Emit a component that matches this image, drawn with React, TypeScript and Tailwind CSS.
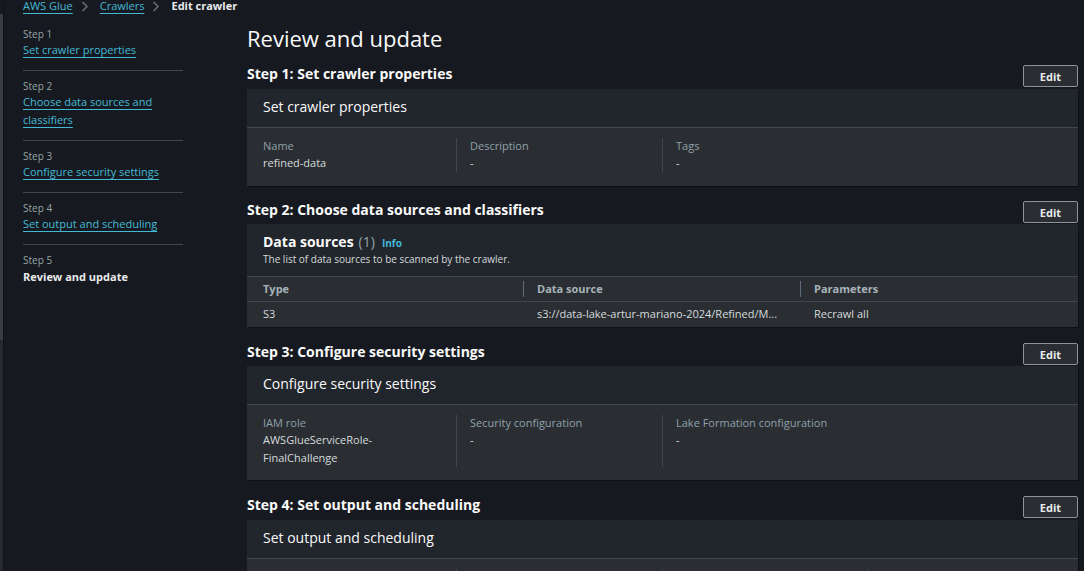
import React from "react";

const Chevron = () => (
  <svg width="8" height="11" viewBox="0 0 8 11" className="mx-[8px] shrink-0">
    <path d="M1.5 1 L6 5.5 L1.5 10" fill="none" stroke="#687078" strokeWidth="1.5" />
  </svg>
);

const EditButton = () => (
  <button className="h-[22px] w-[55px] border border-[#8d9599] bg-[#2a2e33] text-[11px] font-bold leading-none text-[#e9ebed] rounded-[2px]">
    Edit
  </button>
);

const StepHeader = ({ title }: { title: string }) => (
  <div className="flex h-[22px] items-center justify-between">
    <h2 className="mb-[4px] text-[14px] font-bold leading-[18px] text-[#fafafa]">{title}</h2>
    <EditButton />
  </div>
);

const SimpleHeader = ({ title }: { title: string }) => (
  <div className="flex h-[39px] items-center border-b border-[#414750] bg-[#21252c] pb-[4px] pl-[16px] text-[14px] text-[#fafafa]">
    {title}
  </div>
);

type Col = { label: string; value: React.ReactNode };

const KVBody = ({ cols, pb }: { cols: Col[]; pb: string }) => (
  <div className={"flex pl-[16px] pt-[10px] " + pb}>
    {cols.map((c, i) => (
      <div
        key={i}
        className={
          i === 0
            ? "w-[193px] shrink-0"
            : "w-[206px] shrink-0 border-l border-[#414750] pl-[13px]"
        }
      >
        <div className="text-[11px] leading-[16px] text-[#8fa0a8]">{c.label}</div>
        <div className="text-[11px] leading-[18px] text-[#d5dbdb]">{c.value}</div>
      </div>
    ))}
  </div>
);

const SideStep = ({
  n,
  lines,
  active,
  first,
}: {
  n: number;
  lines: string[];
  active?: boolean;
  first?: boolean;
}) => (
  <div className={(first ? "pt-[0px]" : "border-t border-[#414750] pt-[7px]") + " pb-[10px]"}>
    <div className="text-[10px] leading-[16px] text-[#95a5a6]">Step {n}</div>
    {active ? (
      <div className="text-[11px] font-bold leading-[18px] text-[#e9ebed]">{lines.join(" ")}</div>
    ) : (
      <div className="-mt-[1px] mb-[1px] text-[11px] leading-[18px] text-[#44b9d6]">
        {lines.map((l, i) => (
          <div key={i}>
            <span className="underline underline-offset-[3px] decoration-[1px]">{l}</span>
          </div>
        ))}
      </div>
    )}
  </div>
);

export default function App() {
  return (
    <div className="flex h-[571px] w-[1084px] overflow-hidden bg-[#16191f] font-['Open_Sans',sans-serif]">
      {/* left scroll strip */}
      <div className="flex w-[4px] shrink-0">
        <div className="flex w-[3px] flex-col">
          <div className="h-[14px] bg-[#16191f]" />
          <div className="h-[326px] bg-[#3a3d42]" />
          <div className="flex-1 bg-[#26292e]" />
        </div>
        <div className="w-[1px] bg-[#101216]" />
      </div>

      <div className="flex flex-1 flex-col pl-[19px]">
        {/* breadcrumbs */}
        <div className="-mt-[2px] flex h-[16px] items-center text-[11px] leading-[16px]">
          <span className="text-[#44b9d6] underline underline-offset-[3px]">AWS Glue</span>
          <Chevron />
          <span className="ml-[3px] text-[#44b9d6] underline underline-offset-[3px]">Crawlers</span>
          <Chevron />
          <span className="ml-[3px] font-bold text-[#e9ebed]">Edit crawler</span>
        </div>

        <div className="flex flex-1">
          {/* sidebar */}
          <div className="w-[160px] shrink-0 pt-[12px]">
            <SideStep n={1} lines={["Set crawler properties"]} first />
            <SideStep n={2} lines={["Choose data sources and", "classifiers"]} />
            <SideStep n={3} lines={["Configure security settings"]} />
            <SideStep n={4} lines={["Set output and scheduling"]} />
            <SideStep n={5} lines={["Review and update"]} active />
          </div>

          {/* main */}
          <div className="ml-[64px] w-[831px] shrink-0 pt-[10px]">
            <h1 className="text-[22px] leading-[28px] text-[#fafafa]">Review and update</h1>

            {/* Step 1 */}
            <div className="mt-[13px]">
              <StepHeader title="Step 1: Set crawler properties" />
              <div className="mt-[2px] bg-[#2a2e33] shadow-[1px_1px_0_0_#0e1014]">
                <SimpleHeader title="Set crawler properties" />
                <KVBody
                  pb="pb-[14px]"
                  cols={[
                    { label: "Name", value: "refined-data" },
                    { label: "Description", value: "-" },
                    { label: "Tags", value: "-" },
                  ]}
                />
              </div>
            </div>

            {/* Step 2 */}
            <div className="mt-[15px]">
              <StepHeader title="Step 2: Choose data sources and classifiers" />
              <div className="mt-[1px] bg-[#2a2e33] shadow-[1px_1px_0_0_#0e1014]">
                <div className="border-b border-[#414750] bg-[#21252c] pl-[16px] pt-[8px] pb-[10px]">
                  <div className="flex items-baseline leading-[20px]">
                    <span className="text-[14px] font-bold text-[#fafafa]">Data sources</span>
                    <span className="ml-[5px] text-[14px] text-[#95a5a6]">(1)</span>
                    <span className="ml-[7px] text-[10px] font-bold text-[#44b9d6]">Info</span>
                  </div>
                  <div className="-mt-[1px] text-[10px] leading-[14px] text-[#d5dbdb]">
                    The list of data sources to be scanned by the crawler.
                  </div>
                </div>
                <div className="flex h-[25px] items-center border-b border-[#414750] text-[11px] font-bold text-[#a7b3b8]">
                  <div className="w-[276px] shrink-0 pl-[16px]">Type</div>
                  <div className="flex w-[277px] shrink-0 items-center">
                    <div className="h-[16px] w-[1px] bg-[#5f6b7a]" />
                    <span className="pl-[13px]">Data source</span>
                  </div>
                  <div className="flex flex-1 items-center">
                    <div className="h-[16px] w-[1px] bg-[#5f6b7a]" />
                    <span className="pl-[13px]">Parameters</span>
                  </div>
                </div>
                <div className="flex h-[25px] items-center text-[11px] text-[#d5dbdb]">
                  <div className="w-[276px] shrink-0 pl-[16px]">S3</div>
                  <div className="w-[277px] shrink-0 pl-[14px]">s3://data-lake-artur-mariano-2024/Refined/M...</div>
                  <div className="flex-1 pl-[14px]">Recrawl all</div>
                </div>
              </div>
            </div>

            {/* Step 3 */}
            <div className="mt-[16px]">
              <StepHeader title="Step 3: Configure security settings" />
              <div className="mt-[1px] bg-[#2a2e33] shadow-[1px_1px_0_0_#0e1014]">
                <SimpleHeader title="Configure security settings" />
                <KVBody
                  pb="pb-[13px]"
                  cols={[
                    {
                      label: "IAM role",
                      value: (
                        <>
                          AWSGlueServiceRole-
                          <br />
                          FinalChallenge
                        </>
                      ),
                    },
                    { label: "Security configuration", value: "-" },
                    { label: "Lake Formation configuration", value: "-" },
                  ]}
                />
              </div>
            </div>

            {/* Step 4 */}
            <div className="mt-[16px]">
              <StepHeader title="Step 4: Set output and scheduling" />
              <div className="mt-[2px] bg-[#2a2e33] shadow-[1px_1px_0_0_#0e1014]">
                <SimpleHeader title="Set output and scheduling" />
                <KVBody
                  pb="pb-[14px]"
                  cols={[
                    { label: "IAM role", value: "-" },
                    { label: "Database", value: "-" },
                    { label: "Table prefix", value: "-" },
                    { label: "Schedule", value: "-" },
                  ]}
                />
              </div>
            </div>
          </div>
        </div>
      </div>
    </div>
  );
}
